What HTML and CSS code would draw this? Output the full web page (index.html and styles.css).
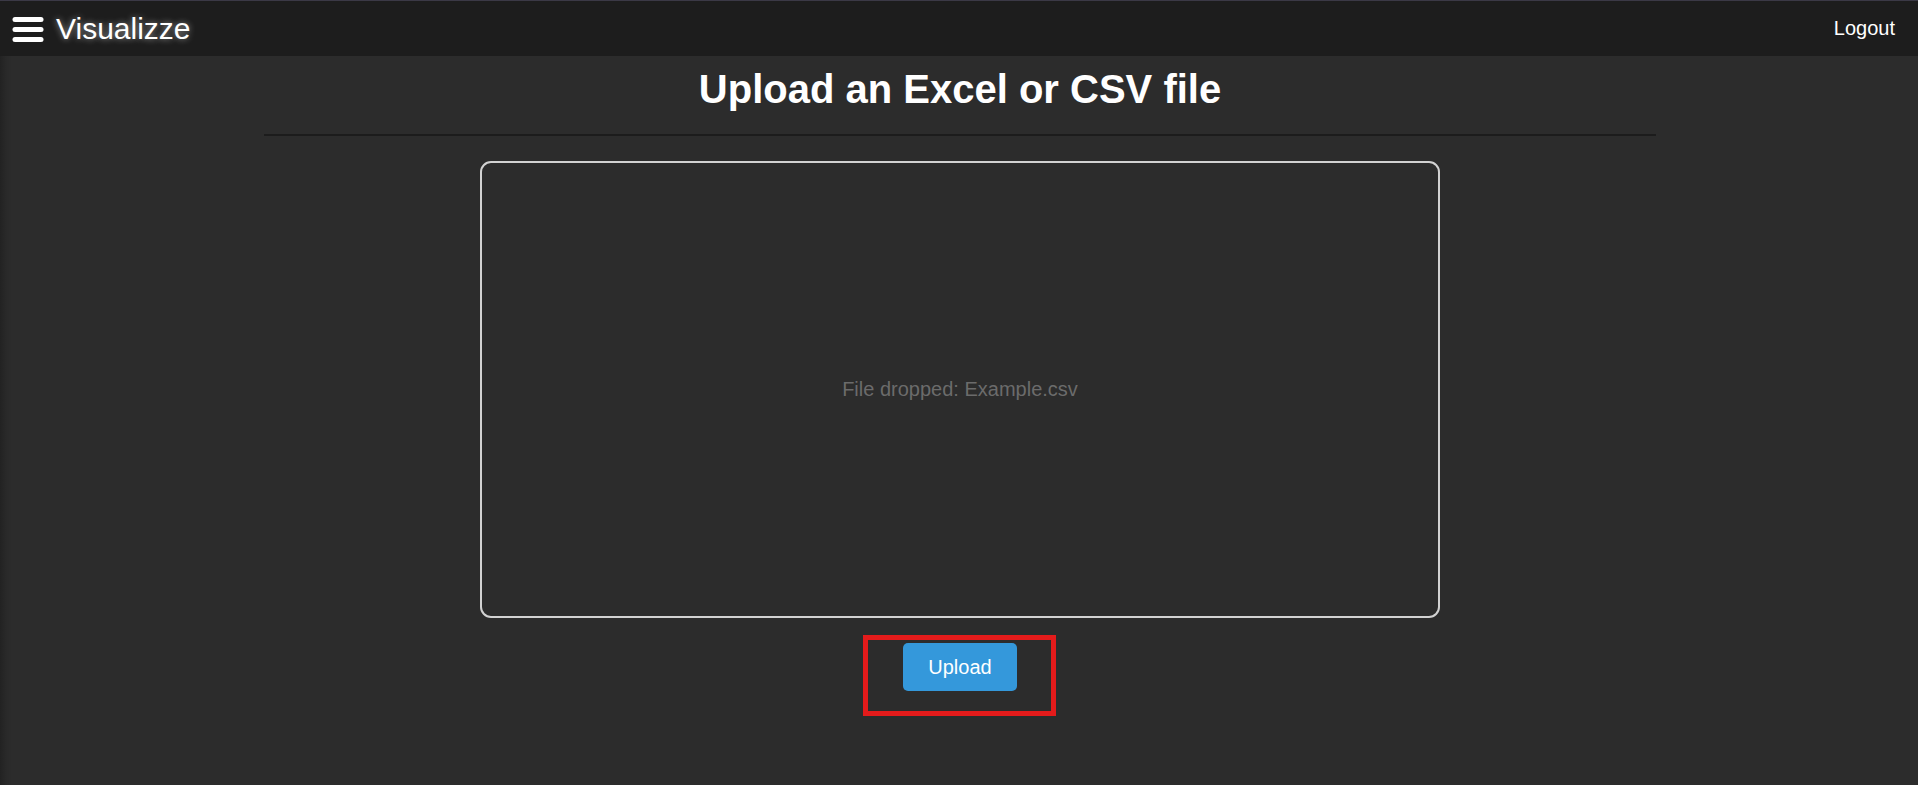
FILE: index.html
```html
<!DOCTYPE html>
<html lang="en">
<head>
<meta charset="utf-8">
<title>Visualizze</title>
<link rel="stylesheet" href="styles.css">
</head>
<body>
<nav class="navbar">
  <svg class="menu-icon" width="32" height="27" viewBox="0 0 32 27" aria-hidden="true">
    <rect x="0.5" y="1" width="31" height="5" rx="2.5" fill="#fff"/>
    <rect x="0.5" y="11" width="31" height="5" rx="2.5" fill="#fff"/>
    <rect x="0.5" y="21" width="31" height="5" rx="2.5" fill="#fff"/>
  </svg>
  <span class="brand">Visualizze</span>
  <a class="logout">Logout</a>
</nav>
<main class="page">
  <h1 class="title">Upload an Excel or CSV file</h1>
  <hr class="divider">
  <div class="dropzone">
    <p class="dropzone-text">File dropped: Example.csv</p>
  </div>
  <div class="actions">
    <div class="btn-wrap">
      <button class="upload-btn">Upload</button>
      <span class="highlight"></span>
    </div>
  </div>
</main>
</body>
</html>
```

FILE: styles.css
```css
html, body {
  margin: 0;
  padding: 0;
}
body {
  width: 1918px;
  height: 785px;
  overflow: hidden;
  font-family: "Liberation Sans", Arial, sans-serif;
  background: linear-gradient(to right, #222222 0px, #292929 6px, #2c2c2c 12px);
  color: #fff;
}
.navbar {
  height: 55px;
  border-top: 1px solid #3b3946;
  background: #1d1d1d;
  display: flex;
  align-items: center;
  padding: 0 23px 0 12px;
}
.menu-icon {
  display: block;
  margin-top: 2px;
}
.brand {
  margin-left: 12px;
  font-size: 30px;
  color: #fff;
  text-shadow: 0 0 6px rgba(255, 255, 255, 0.55);
  line-height: 34px;
}
.logout {
  margin-left: auto;
  font-size: 20px;
  color: #fff;
  line-height: 23px;
}
.page {
  display: flex;
  flex-direction: column;
  align-items: center;
  padding-left: 2px;
}
.title {
  margin: 10px 0 0;
  font-size: 40px;
  line-height: 46px;
  font-weight: bold;
  color: #fff;
}
.divider {
  width: 1392px;
  margin: 22px 0 0;
  border: 0;
  height: 2px;
  background: #1c1c1c;
}
.dropzone {
  box-sizing: border-box;
  margin-top: 25px;
  width: 960px;
  height: 457px;
  border: 2px solid #d2d2d2;
  border-radius: 11px;
  display: flex;
  align-items: center;
  justify-content: center;
}
.dropzone-text {
  margin: 0;
  font-size: 20px;
  color: #6b6b6b;
}
.actions {
  margin-top: 25px;
}
.btn-wrap {
  position: relative;
}
.upload-btn {
  display: block;
  font-family: inherit;
  font-size: 20px;
  line-height: 24px;
  padding: 12px 25px;
  background: #3498db;
  color: #fff;
  border: 0;
  border-radius: 5px;
}
.highlight {
  position: absolute;
  left: -40px;
  right: -39px;
  top: -8px;
  bottom: -25px;
  border: 5px solid #e41b1b;
  pointer-events: none;
}
```
